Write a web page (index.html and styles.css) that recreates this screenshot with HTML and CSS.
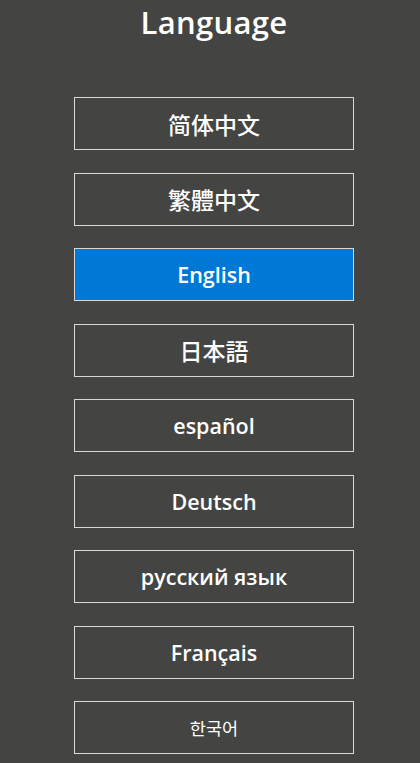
FILE: index.html
```html
<!DOCTYPE html>
<html lang="en">
<head>
  <meta charset="UTF-8">
  <title>Language</title>
  <meta name="viewport" content="width=device-width, initial-scale=1.0">
  <link rel="stylesheet" href="styles.css">
</head>
<body>
  <h2 class="title">Language</h2>
  <div class="langs">
    <button class="lang" lang="zh-CN">简体中文</button>
    <button class="lang" lang="zh-TW">繁體中文</button>
    <button class="lang active" lang="en">English</button>
    <button class="lang" lang="ja">日本語</button>
    <button class="lang" lang="es">español</button>
    <button class="lang" lang="de">Deutsch</button>
    <button class="lang" lang="ru">русский язык</button>
    <button class="lang" lang="fr">Français</button>
    <button class="lang" lang="ko">한국어</button>
  </div>
</body>
</html>
```

FILE: styles.css
```css
body { margin: 0; background-color: #444542; color: #fff; font-family: "Open Sans", "Noto Sans CJK SC", sans-serif; padding: 0 66px 0 74px; overflow: hidden; }
.title { margin: 0; height: 97px; padding-top: 0; box-sizing: border-box; font-size: 31px; font-weight: 600; text-align: center; line-height: 44px; letter-spacing: 0.3px; }
.langs { display: flex; flex-direction: column; gap: 22.5px; }
.lang { height: 53px; width: 100%; background: transparent; color: #fff; border: 1px solid #d8d8d8; font-family: "Open Sans", sans-serif; font-size: 21.5px; font-weight: 600; padding: 0; cursor: pointer; }
.lang:lang(zh-CN) { font-family: "Noto Sans CJK SC", sans-serif; font-size: 23px; font-weight: 500; }
.lang:lang(zh-TW) { font-family: "Noto Sans CJK TC", sans-serif; font-size: 23px; font-weight: 500; }
.lang:lang(ja) { font-family: "Noto Sans CJK JP", sans-serif; font-size: 23px; font-weight: 500; }
.lang:lang(ko) { font-family: "Noto Sans CJK KR", sans-serif; font-size: 17.5px; font-weight: 400; }
.active { background-color: #0078d7; }
```
